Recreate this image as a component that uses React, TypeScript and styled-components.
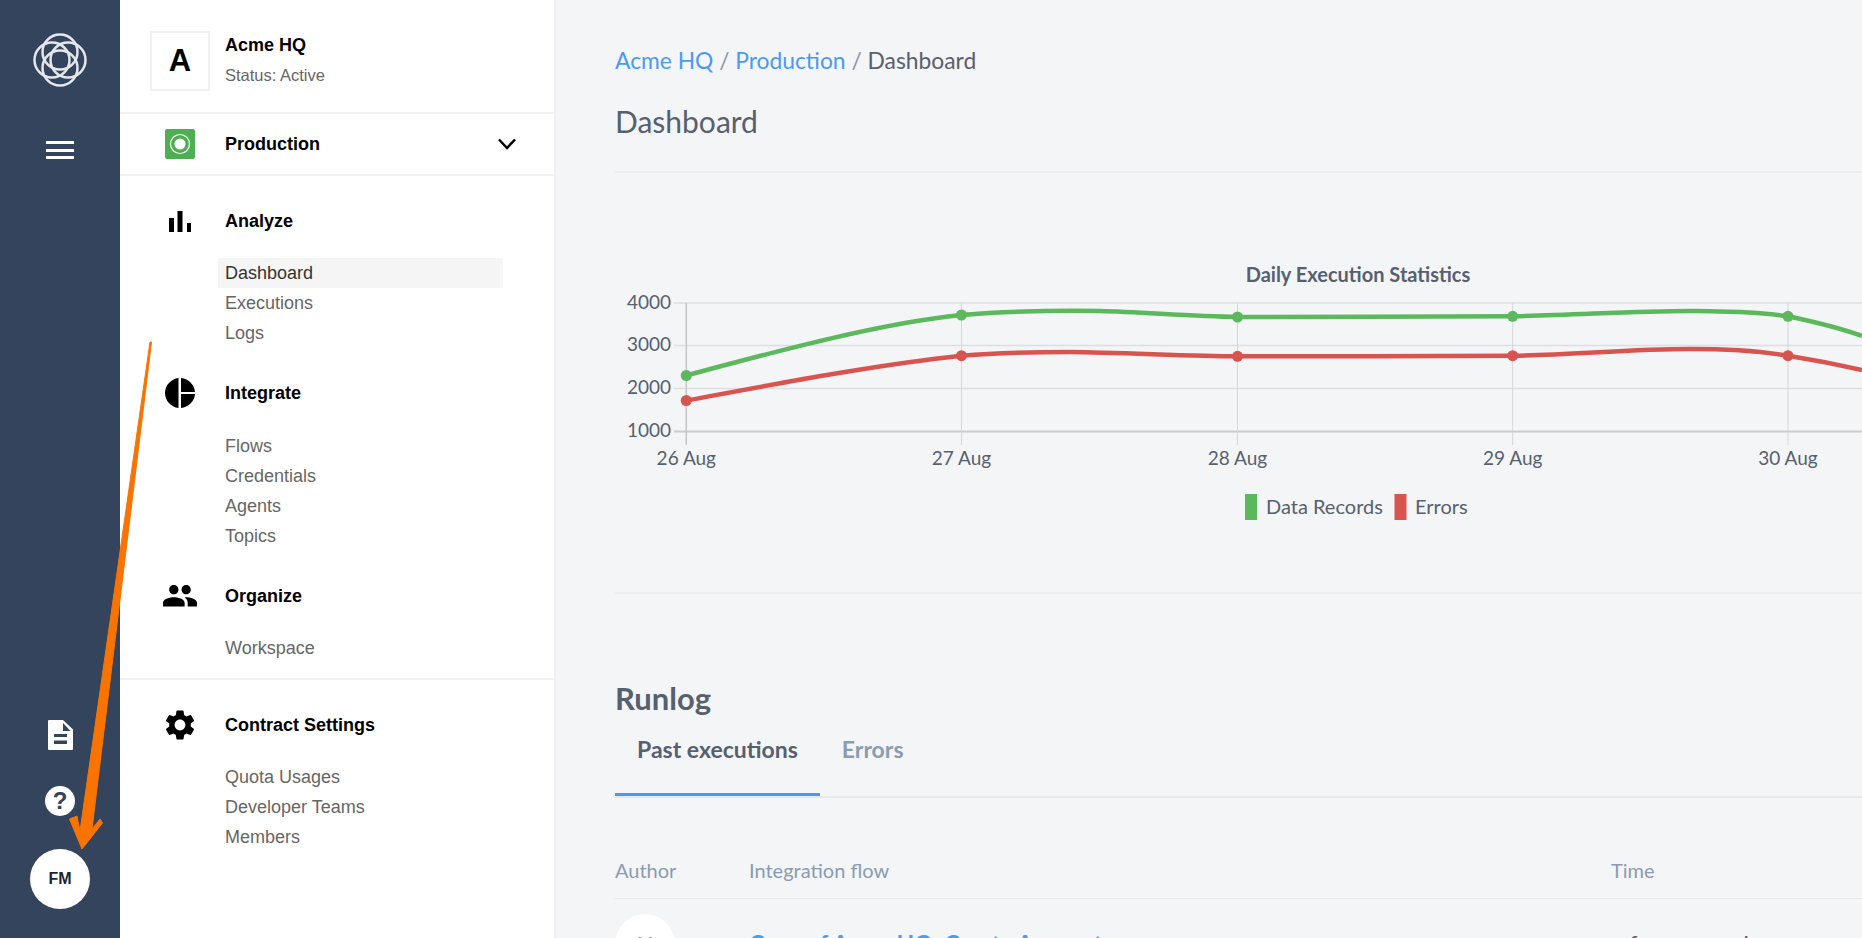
import React from "react";
import styled, { createGlobalStyle } from "styled-components";

const Global = createGlobalStyle`
  html, body { margin: 0; padding: 0; height: 100%; overflow: hidden; background: #f4f5f7; }
  #root { height: 100%; }
  * { box-sizing: border-box; }
`;

const contentFont = `"Lato", "Noto Sans", sans-serif`;
const navFont = `"Liberation Sans", Arial, sans-serif`;

const Page = styled.div`
  position: relative;
  display: flex;
  width: 1862px;
  height: 938px;
  overflow: hidden;
`;

const Rail = styled.aside`
  flex: 0 0 120px;
  background: #33445c;
  display: flex;
  flex-direction: column;
  align-items: center;
  padding-top: 33px;
`;

const Menu = styled.div`
  margin-top: 54px;
  width: 28px;
  height: 18px;
  display: flex;
  flex-direction: column;
  justify-content: space-between;
  & > i { display: block; height: 3px; background: #fff; }
`;

const RailBottom = styled.div`
  margin-top: auto;
  padding-bottom: 29px;
  display: flex;
  flex-direction: column;
  align-items: center;
`;

const HelpCircle = styled.div`
  margin-top: 36px;
  width: 30px;
  height: 30px;
  border-radius: 50%;
  background: #fff;
  color: #33445c;
  font: 700 24px/30px ${navFont};
  text-align: center;
`;

const Avatar = styled.div`
  margin-top: 33px;
  width: 60px;
  height: 60px;
  border-radius: 50%;
  background: #fff;
  color: #1b2433;
  font: 700 16px/60px ${navFont};
  text-align: center;
`;

const Side = styled.nav`
  flex: 0 0 436px;
  background: #fff;
  border-right: 2px solid #f0f0f0;
  font-family: ${navFont};
  display: flex;
  flex-direction: column;
`;

const Tenant = styled.div`
  height: 112px;
  padding: 31px 0 0 30px;
  display: flex;
`;

const TenantLogo = styled.div`
  width: 60px;
  height: 60px;
  border: 2px solid #f1f1f1;
  font: 700 31px/56px ${navFont};
  color: #000;
  text-align: center;
`;

const TenantText = styled.div`
  margin-left: 15px;
  padding-top: 4px;
`;

const TenantName = styled.div`
  font: 700 18px/20px ${navFont};
  color: #000;
`;

const TenantStatus = styled.div`
  margin-top: 11px;
  font: 400 16.5px/18px ${navFont};
  color: #666;
`;

const Env = styled.div`
  height: 64px;
  border-top: 2px solid #f0f0f0;
  border-bottom: 2px solid #f0f0f0;
  display: flex;
  align-items: center;
  padding-left: 45px;
`;

const EnvBadge = styled.div`
  width: 30px;
  height: 30px;
  border-radius: 2px;
  background: #4caf50;
  display: flex;
  align-items: center;
  justify-content: center;
`;

const EnvName = styled.div`
  margin-left: 30px;
  flex: 1;
  font: 700 18px/20px ${navFont};
  color: #000;
`;

const Chevron = styled.div`
  margin-right: 37px;
  display: flex;
`;

const Section = styled.section<{ $top: number }>`
  padding-top: ${(p) => p.$top}px;
`;

const SectionHead = styled.div`
  display: flex;
  align-items: center;
  height: 30px;
`;

const IconSlot = styled.div`
  flex: 0 0 105px;
  display: flex;
  justify-content: center;
  padding-left: 15px;
`;

const SectionTitle = styled.div`
  font: 700 18px/30px ${navFont};
  color: #000;
`;

const SubList = styled.ul<{ $gap?: number }>`
  list-style: none;
  margin: ${(p) => p.$gap ?? 22}px 0 0 98px;
  padding: 0;
  width: 285px;
`;

const SubItem = styled.li<{ $active?: boolean }>`
  height: 30px;
  padding-left: 7px;
  font: 400 18px/30px ${navFont};
  color: ${(p) => (p.$active ? "#333" : "#666")};
  background: ${(p) => (p.$active ? "#f5f5f5" : "transparent")};
`;

const Divider = styled.div`
  height: 2px;
  background: #f0f0f0;
  margin-top: 15px;
`;

const Main = styled.main`
  flex: 1;
  min-width: 0;
  background: #f4f5f7;
  padding: 45px 0 0 59px;
  font-family: ${contentFont};
  color: #56606f;
`;

const Crumbs = styled.div`
  font-size: 22.8px;
  line-height: 30px;
  color: #8a97a8;
`;

const CrumbLink = styled.span`
  color: #4a9af5;
`;

const CrumbNow = styled.span`
  color: #56606f;
`;

const Title = styled.h1`
  margin: 26px 0 0;
  font-size: 30px;
  line-height: 40px;
  font-weight: 400;
  color: #56606f;
`;

const Rule = styled.div<{ $top: number }>`
  height: 2px;
  background: #eceef0;
  margin-top: ${(p) => p.$top}px;
`;

const ChartBox = styled.div`
  margin-top: 87px;
  height: 332px;
`;

const Runlog = styled.h2`
  margin: 84px 0 0;
  font-size: 31px;
  line-height: 40px;
  font-weight: 700;
  color: #56606f;
`;

const Tabs = styled.div`
  display: flex;
  height: 80px;
  border-bottom: 2px solid #e6e8ea;
`;

const Tab = styled.div<{ $active?: boolean }>`
  height: 78px;
  padding: 16px 22px 0;
  font-size: 23px;
  line-height: 30px;
  font-weight: 700;
  color: ${(p) => (p.$active ? "#56606f" : "#8a9bb2")};
  border-bottom: ${(p) => (p.$active ? "3px solid #4a9af5" : "none")};
`;

const HeadRow = styled.div`
  margin-top: 57px;
  height: 44px;
  border-bottom: 1px solid #e6e8ea;
  display: grid;
  grid-template-columns: 134px 862px 1fr;
  font-size: 20px;
  line-height: 30px;
  color: #8a9bb2;
`;

const DataRow = styled.div`
  margin-top: 15px;
  display: grid;
  grid-template-columns: 134px 862px 1fr;
  align-items: start;
`;

const RowAvatar = styled.div`
  width: 60px;
  height: 60px;
  border-radius: 50%;
  background: #fff;
  color: #7a8aa0;
  font-size: 22px;
  line-height: 60px;
  text-align: center;
`;

const FlowLink = styled.div`
  margin-top: 14px;
  font-size: 23px;
  line-height: 30px;
  font-weight: 700;
  color: #4a9af5;
`;

const TimeValue = styled.div`
  margin-top: 15px;
  font-size: 24px;
  line-height: 30px;
  color: #56606f;
`;

const ArrowSvg = styled.svg`
  position: absolute;
  left: 60px;
  top: 330px;
  pointer-events: none;
`;

const xs = [686.3, 961.5, 1237.5, 1512.7, 1788];
const ys = [303, 345.5, 388.5, 431.5];
const greenY = [375.5, 315, 317, 316.3, 316.3];
const redY = [400.5, 355.7, 356.3, 355.7, 355.7];

function Chart() {
  return (
    <svg width="1247" height="332" viewBox="615 260 1247 332" style={{ display: "block" }}>
      <text x="1358" y="282" textAnchor="middle" fontFamily={contentFont} fontWeight="700" fontSize="20" fill="#56606f">Daily Execution Statistics</text>
      {ys.map((y, i) => (
        <g key={y}>
          <line x1="674" x2="1862" y1={y} y2={y} stroke={i === 3 ? "#c9cbcf" : "#dcdee1"} strokeWidth={i === 3 ? 2 : 1.5} />
          <text x="671" y={y + 5.5} textAnchor="end" fontFamily={contentFont} fontSize="19" fill="#56606f">{4000 - i * 1000}</text>
        </g>
      ))}
      {xs.map((x, i) => (
        <g key={x}>
          <line x1={x} x2={x} y1="303" y2="445" stroke={i === 0 ? "#c4c6ca" : "#d4d6da"} strokeWidth={i === 0 ? 1.5 : 1} />
          <text x={x} y="465" textAnchor="middle" fontFamily={contentFont} fontSize="19" fill="#56606f">{26 + i} Aug</text>
        </g>
      ))}
      <path d="M686.300 375.500 C 770 353, 880 323, 961.500 315 C 1010 311, 1060 310.500, 1100 311 C 1140 312, 1190 316, 1237.500 317 C 1330 317, 1420 316.500, 1512.700 316.300 C 1580 315, 1640 310.500, 1696 311 C 1730 311.500, 1760 312, 1788 316.300 C 1815 322, 1840 328, 1862 336" fill="none" stroke="#5cb85c" strokeWidth="4.500" />
      <path d="M686.300 400.500 C 770 385, 880 364, 961.500 355.700 C 1000 352.500, 1040 352, 1070 352 C 1120 352.500, 1190 356, 1237.500 356.300 C 1330 356.500, 1420 356, 1512.700 355.700 C 1570 355, 1630 349, 1690 349 C 1730 349, 1760 351, 1788 355.700 C 1815 360, 1840 365, 1862 370" fill="none" stroke="#d9534f" strokeWidth="4.500" />
      {xs.map((x, i) => (
        <g key={x}>
          <circle cx={x} cy={greenY[i]} r="5.500" fill="#5cb85c" />
          <circle cx={x} cy={redY[i]} r="5.500" fill="#d9534f" />
        </g>
      ))}
      <rect x="1245" y="494" width="12" height="26" fill="#5cb85c" />
      <text x="1266" y="514" fontFamily={contentFont} fontSize="20" fill="#56606f">Data Records</text>
      <rect x="1394.500" y="494" width="12" height="26" fill="#d9534f" />
      <text x="1415" y="514" fontFamily={contentFont} fontSize="20" fill="#56606f">Errors</text>
    </svg>
  );
}

export default function App() {
  return (
    <Page>
      <Global />
      <Rail>
        <svg width="54" height="54" viewBox="0 0 54 54" fill="none" stroke="#e4e7ec" strokeWidth="2.500">
          <circle cx="27" cy="19" r="17.500" />
          <circle cx="27" cy="35" r="17.500" />
          <circle cx="19" cy="27" r="17.500" />
          <circle cx="35" cy="27" r="17.500" />
        </svg>
        <Menu><i /><i /><i /></Menu>
        <RailBottom>
          <svg width="25" height="30" viewBox="0 0 25 30">
            <path fill="#fff" d="M1 0a1 1 0 0 0-1 1v28a1 1 0 0 0 1 1h23a1 1 0 0 0 1-1V9.500L15 0z" />
            <path fill="#33445c" d="M15 3 22.500 11H15zM6 14h13v3H6zM6 20.500h13v3.500H6z" />
          </svg>
          <HelpCircle>?</HelpCircle>
          <Avatar>FM</Avatar>
        </RailBottom>
      </Rail>
      <Side>
        <Tenant>
          <TenantLogo>A</TenantLogo>
          <TenantText>
            <TenantName>Acme HQ</TenantName>
            <TenantStatus>Status: Active</TenantStatus>
          </TenantText>
        </Tenant>
        <Env>
          <EnvBadge>
            <svg width="22" height="22" viewBox="0 0 22 22">
              <circle cx="11" cy="11" r="9.500" fill="none" stroke="#fff" strokeWidth="1.200" />
              <circle cx="11" cy="11" r="5.500" fill="#fff" />
            </svg>
          </EnvBadge>
          <EnvName>Production</EnvName>
          <Chevron>
            <svg width="20" height="14" viewBox="0 0 20 14" fill="none" stroke="#000" strokeWidth="2.500">
              <path d="M2 2.500 10 11 18 2.500" />
            </svg>
          </Chevron>
        </Env>
        <Section $top={30}>
          <SectionHead>
            <IconSlot>
              <svg width="22" height="21" viewBox="0 0 22 21"><path d="M0 7h5v14H0zM8.500 0h5v21h-5zM18 12h4v9h-4z" /></svg>
            </IconSlot>
            <SectionTitle>Analyze</SectionTitle>
          </SectionHead>
          <SubList>
            <SubItem $active>Dashboard</SubItem>
            <SubItem>Executions</SubItem>
            <SubItem>Logs</SubItem>
          </SubList>
        </Section>
        <Section $top={30}>
          <SectionHead>
            <IconSlot>
              <svg width="30" height="30" viewBox="0 0 30 30"><path d="M13.500 0v30C6 29 0 22.800 0 15S6 1 13.500 0zM16 0C23.500.6 29.400 6.500 30 14H16zM16 16H30C29.400 23.500 23.500 29.400 16 30z" /></svg>
            </IconSlot>
            <SectionTitle>Integrate</SectionTitle>
          </SectionHead>
          <SubList $gap={23}>
            <SubItem>Flows</SubItem>
            <SubItem>Credentials</SubItem>
            <SubItem>Agents</SubItem>
            <SubItem>Topics</SubItem>
          </SubList>
        </Section>
        <Section $top={30}>
          <SectionHead>
            <IconSlot>
              <svg width="34" height="21.600" viewBox="1 5 22 14"><path d="M16 11c1.660 0 2.990-1.340 2.990-3S17.660 5 16 5c-1.660 0-3 1.340-3 3s1.340 3 3 3zm-8 0c1.660 0 2.990-1.340 2.990-3S9.660 5 8 5C6.340 5 5 6.340 5 8s1.340 3 3 3zm0 2c-2.330 0-7 1.170-7 3.500V19h14v-2.500c0-2.330-4.670-3.500-7-3.500zm8 0c-.29 0-.62.020-.97.050 1.160.840 1.970 1.970 1.970 3.450V19h6v-2.500c0-2.330-4.670-3.500-7-3.500z" /></svg>
            </IconSlot>
            <SectionTitle>Organize</SectionTitle>
          </SectionHead>
          <SubList>
            <SubItem>Workspace</SubItem>
          </SubList>
          <Divider />
        </Section>
        <Section $top={30}>
          <SectionHead>
            <IconSlot>
              <svg width="28" height="30" viewBox="2.700 2 18.600 20"><path d="M19.140 12.940c.04-.3.060-.61.060-.94 0-.32-.02-.64-.07-.94l2.030-1.580a.49.490 0 0 0 .12-.61l-1.920-3.320a.488.488 0 0 0-.59-.22l-2.390.96c-.5-.38-1.030-.7-1.620-.94l-.36-2.540a.484.484 0 0 0-.48-.41h-3.840c-.24 0-.43.170-.47.410l-.36 2.540c-.59.240-1.130.570-1.620.94l-2.390-.96c-.22-.08-.47 0-.59.220L2.740 8.870c-.12.210-.08.470.120.610l2.030 1.580c-.05.300-.09.630-.09.940s.02.640.07.940l-2.030 1.580a.49.490 0 0 0-.12.610l1.920 3.320c.12.220.37.290.59.220l2.390-.96c.5.380 1.030.7 1.620.94l.36 2.540c.05.240.24.410.48.410h3.840c.24 0 .44-.17.470-.41l.36-2.540c.59-.24 1.130-.56 1.620-.94l2.390.96c.22.080.47 0 .59-.22l1.920-3.320c.12-.22.070-.47-.12-.61l-2.010-1.580zM12 15.600c-1.980 0-3.600-1.620-3.600-3.600s1.620-3.600 3.600-3.600 3.600 1.620 3.600 3.600-1.620 3.600-3.600 3.600z" /></svg>
            </IconSlot>
            <SectionTitle>Contract Settings</SectionTitle>
          </SectionHead>
          <SubList>
            <SubItem>Quota Usages</SubItem>
            <SubItem>Developer Teams</SubItem>
            <SubItem>Members</SubItem>
          </SubList>
        </Section>
      </Side>
      <Main>
        <Crumbs>
          <CrumbLink>Acme HQ</CrumbLink> / <CrumbLink>Production</CrumbLink> / <CrumbNow>Dashboard</CrumbNow>
        </Crumbs>
        <Title>Dashboard</Title>
        <Rule $top={30} />
        <ChartBox><Chart /></ChartBox>
        <Rule $top={0} />
        <Runlog>Runlog</Runlog>
        <Tabs>
          <Tab $active>Past executions</Tab>
          <Tab>Errors</Tab>
        </Tabs>
        <HeadRow>
          <div>Author</div>
          <div>Integration flow</div>
          <div>Time</div>
        </HeadRow>
        <DataRow>
          <RowAvatar>U</RowAvatar>
          <FlowLink>Copy of Acme HQ: Create Account</FlowLink>
          <TimeValue>a few seconds ago</TimeValue>
        </DataRow>
      </Main>
      <ArrowSvg width="100" height="540" viewBox="60 330 100 540">
        <polygon points="150,342 151.500,342 92,829 100,819 102.500,823 82,849 69.500,819 77,816 80,831" fill="#f97300" stroke="#f97300" strokeWidth="1" strokeLinejoin="round" />
      </ArrowSvg>
    </Page>
  );
}
